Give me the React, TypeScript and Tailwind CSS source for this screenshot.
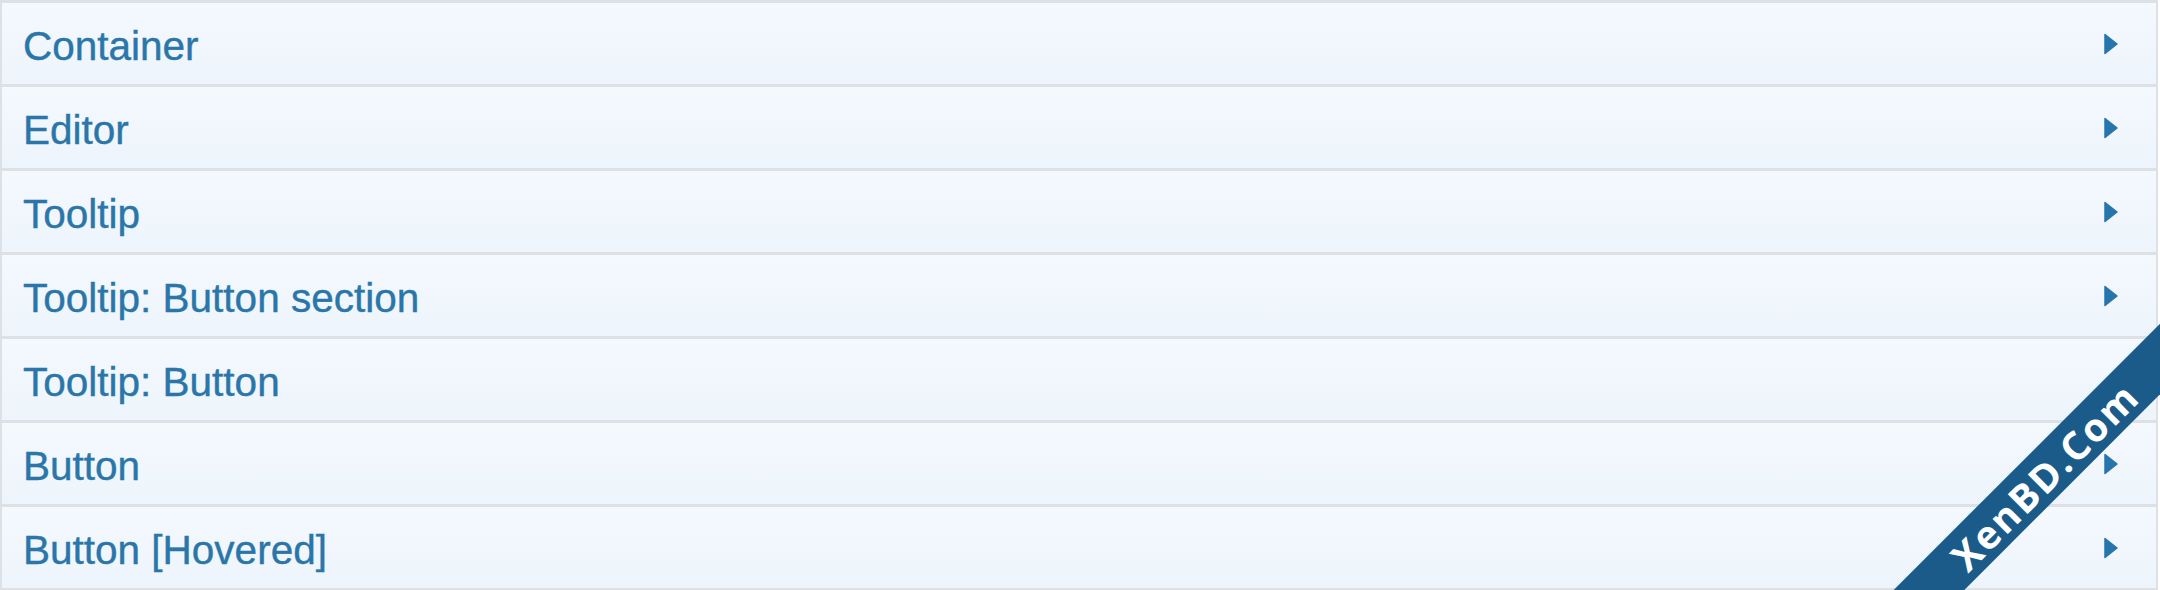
const ITEMS = [
  { label: 'Container', arrow: true },
  { label: 'Editor', arrow: true },
  { label: 'Tooltip', arrow: true },
  { label: 'Tooltip: Button section', arrow: true },
  { label: 'Tooltip: Button', arrow: false },
  { label: 'Button', arrow: true },
  { label: 'Button [Hovered]', arrow: true },
]

function Caret() {
  return (
    <svg width="14" height="22" viewBox="0 0 14 22" className="shrink-0">
      <path d="M1 1.5 L13 11 L1 20.5 Z" fill="#2675ad" stroke="#2675ad" strokeWidth="1.5" strokeLinejoin="round" />
    </svg>
  )
}

export default function App() {
  return (
    <div className="relative h-[590px] w-[2160px] overflow-hidden bg-white font-['Liberation_Sans',Arial,sans-serif]">
      <div className="w-[2158px] border-b-2 border-[#dde0e4]">
        {ITEMS.map((item) => (
          <div
            key={item.label}
            className="flex h-[84px] items-center justify-between border-x-2 border-t-[3px] border-[#dde0e4] bg-gradient-to-b from-[#f4f9fe] to-[#edf4fb] pl-[21px] pr-[38px]"
          >
            <span className="pt-[5px] text-[40.5px] leading-none text-[#2a76a9] [-webkit-text-stroke:0.4px_#2a76a9]">
              {item.label}
            </span>
            {item.arrow && <Caret />}
          </div>
        ))}
      </div>

      {/* watermark ribbon */}
      <div className="absolute left-[1793px] top-[451px] flex h-[50px] w-[500px] -rotate-45 items-center justify-center bg-[#1b5b8a]">
        <span className="pl-[2px] font-['Open_Sans',sans-serif] text-[39px] font-bold leading-none tracking-[2px] text-white">
          XenBD.Com
        </span>
      </div>
    </div>
  )
}
